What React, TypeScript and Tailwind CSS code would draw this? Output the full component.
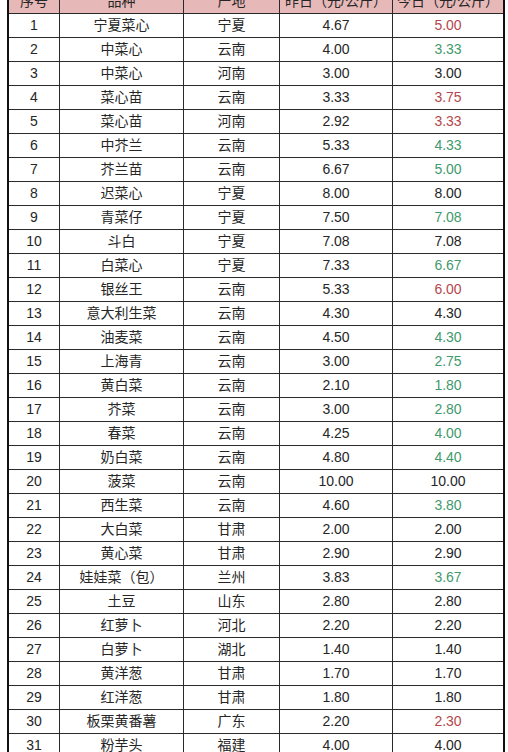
const rows: [number, string, string, string, string, "" | "up" | "down"][] = [
  [1, "宁夏菜心", "宁夏", "4.67", "5.00", "up"],
  [2, "中菜心", "云南", "4.00", "3.33", "down"],
  [3, "中菜心", "河南", "3.00", "3.00", ""],
  [4, "菜心苗", "云南", "3.33", "3.75", "up"],
  [5, "菜心苗", "河南", "2.92", "3.33", "up"],
  [6, "中芥兰", "云南", "5.33", "4.33", "down"],
  [7, "芥兰苗", "云南", "6.67", "5.00", "down"],
  [8, "迟菜心", "宁夏", "8.00", "8.00", ""],
  [9, "青菜仔", "宁夏", "7.50", "7.08", "down"],
  [10, "斗白", "宁夏", "7.08", "7.08", ""],
  [11, "白菜心", "宁夏", "7.33", "6.67", "down"],
  [12, "银丝王", "云南", "5.33", "6.00", "up"],
  [13, "意大利生菜", "云南", "4.30", "4.30", ""],
  [14, "油麦菜", "云南", "4.50", "4.30", "down"],
  [15, "上海青", "云南", "3.00", "2.75", "down"],
  [16, "黄白菜", "云南", "2.10", "1.80", "down"],
  [17, "芥菜", "云南", "3.00", "2.80", "down"],
  [18, "春菜", "云南", "4.25", "4.00", "down"],
  [19, "奶白菜", "云南", "4.80", "4.40", "down"],
  [20, "菠菜", "云南", "10.00", "10.00", ""],
  [21, "西生菜", "云南", "4.60", "3.80", "down"],
  [22, "大白菜", "甘肃", "2.00", "2.00", ""],
  [23, "黄心菜", "甘肃", "2.90", "2.90", ""],
  [24, "娃娃菜（包）", "兰州", "3.83", "3.67", "down"],
  [25, "土豆", "山东", "2.80", "2.80", ""],
  [26, "红萝卜", "河北", "2.20", "2.20", ""],
  [27, "白萝卜", "湖北", "1.40", "1.40", ""],
  [28, "黄洋葱", "甘肃", "1.70", "1.70", ""],
  [29, "红洋葱", "甘肃", "1.80", "1.80", ""],
  [30, "板栗黄番薯", "广东", "2.20", "2.30", "up"],
  [31, "粉芋头", "福建", "4.00", "4.00", ""],
];

const grid =
  "grid grid-cols-[51px_124px_96px_113px_110px] h-[24px] border-b border-[#2a2a2a]";
const cell = "flex items-center justify-center border-r border-[#2a2a2a]";
const last = "flex items-center justify-center";

export default function App() {
  return (
    <div className="w-[508px] h-[752px] overflow-hidden bg-white">
      <div
        className="ml-[7px] -mt-[10px] w-[498px] border-x-2 border-[#111] text-[14px] text-[#262626]"
        style={{ fontFamily: '"Liberation Sans", "Noto Sans CJK SC", sans-serif' }}
      >
        <div className={`${grid} bg-[#e6b8b7]`}>
          <div className={cell}>序号</div>
          <div className={cell}>品种</div>
          <div className={cell}>产地</div>
          <div className={cell}>昨日（元/公斤）</div>
          <div className={last}>今日（元/公斤）</div>
        </div>
        {rows.map(([n, name, place, y, t, trend]) => (
          <div key={n} className={grid}>
            <div className={cell}>{n}</div>
            <div className={cell}>{name}</div>
            <div className={cell}>{place}</div>
            <div className={cell}>{y}</div>
            <div
              className={`${last} ${
                trend === "up"
                  ? "text-[#b5474b]"
                  : trend === "down"
                  ? "text-[#3f9a6c]"
                  : ""
              }`}
            >
              {t}
            </div>
          </div>
        ))}
      </div>
    </div>
  );
}
